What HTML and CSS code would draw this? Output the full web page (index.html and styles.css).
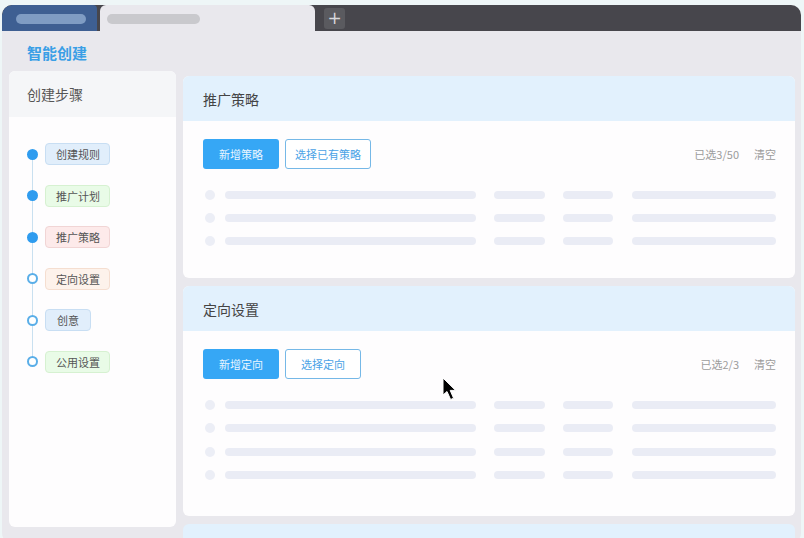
FILE: index.html
```html
<!DOCTYPE html>
<html lang="zh">
<head>
<meta charset="utf-8">
<title>智能创建</title>
<link rel="stylesheet" href="styles.css">
</head>
<body>
<div class="window">
  <div class="tabbar">
    <div class="tab tab-active"><span class="tab-pill"></span></div>
    <div class="tab tab-light"><span class="tab-pill"></span></div>
    <div class="tab-add">+</div>
  </div>
  <div class="content">
    <div class="page-title">智能创建</div>
    <div class="main">
      <aside class="steps-panel">
        <div class="steps-head">创建步骤</div>
        <ul class="steps">
          <li class="step"><span class="dot dot-on"></span><span class="tag tag-blue">创建规则</span></li>
          <li class="step"><span class="dot dot-on"></span><span class="tag tag-green">推广计划</span></li>
          <li class="step"><span class="dot dot-on"></span><span class="tag tag-red">推广策略</span></li>
          <li class="step"><span class="dot"></span><span class="tag tag-orange">定向设置</span></li>
          <li class="step"><span class="dot"></span><span class="tag tag-blue tag-short">创意</span></li>
          <li class="step"><span class="dot"></span><span class="tag tag-green">公用设置</span></li>
        </ul>
      </aside>
      <section class="cards">
        <div class="card">
          <div class="card-head">推广策略</div>
          <div class="card-body">
            <div class="toolbar">
              <button class="btn btn-primary">新增策略</button>
              <button class="btn btn-outline">选择已有策略</button>
              <span class="toolbar-info">已选3/50</span>
              <span class="toolbar-clear">清空</span>
            </div>
            <div class="skeleton">
              <div class="sk-row"><span class="sk-dot"></span><span class="sk-bar sk-a"></span><span class="sk-bar sk-b"></span><span class="sk-bar sk-c"></span><span class="sk-bar sk-d"></span></div>
              <div class="sk-row"><span class="sk-dot"></span><span class="sk-bar sk-a"></span><span class="sk-bar sk-b"></span><span class="sk-bar sk-c"></span><span class="sk-bar sk-d"></span></div>
              <div class="sk-row"><span class="sk-dot"></span><span class="sk-bar sk-a"></span><span class="sk-bar sk-b"></span><span class="sk-bar sk-c"></span><span class="sk-bar sk-d"></span></div>
            </div>
          </div>
        </div>
        <div class="card card-tall">
          <div class="card-head">定向设置</div>
          <div class="card-body">
            <div class="toolbar">
              <button class="btn btn-primary">新增定向</button>
              <button class="btn btn-outline">选择定向</button>
              <span class="toolbar-info">已选2/3</span>
              <span class="toolbar-clear">清空</span>
            </div>
            <div class="skeleton">
              <div class="sk-row"><span class="sk-dot"></span><span class="sk-bar sk-a"></span><span class="sk-bar sk-b"></span><span class="sk-bar sk-c"></span><span class="sk-bar sk-d"></span></div>
              <div class="sk-row"><span class="sk-dot"></span><span class="sk-bar sk-a"></span><span class="sk-bar sk-b"></span><span class="sk-bar sk-c"></span><span class="sk-bar sk-d"></span></div>
              <div class="sk-row"><span class="sk-dot"></span><span class="sk-bar sk-a"></span><span class="sk-bar sk-b"></span><span class="sk-bar sk-c"></span><span class="sk-bar sk-d"></span></div>
              <div class="sk-row"><span class="sk-dot"></span><span class="sk-bar sk-a"></span><span class="sk-bar sk-b"></span><span class="sk-bar sk-c"></span><span class="sk-bar sk-d"></span></div>
            </div>
          </div>
        </div>
        <div class="card card-peek">
          <div class="card-head"></div>
        </div>
      </section>
    </div>
  </div>
  <svg class="cursor" width="18" height="24" viewBox="0 0 18 24" aria-hidden="true">
    <path d="M1 1 L1 18 L5 14.5 L8.6 22.5 L11.6 21.2 L8.2 13.4 L13.6 13.4 Z" fill="#000" stroke="#fff" stroke-width="1" stroke-linejoin="round"/>
  </svg>
</div>
</body>
</html>
```

FILE: styles.css
```css
* { box-sizing: border-box; }
html, body { margin: 0; padding: 0; }
body {
  width: 804px;
  height: 538px;
  overflow: hidden;
  background: #eef6f7;
  font-family: "Noto Sans CJK SC", "Noto Sans", sans-serif;
}
.window {
  position: relative;
  margin: 5px 3px 0 2px;
  height: 538px;
  border-radius: 10px;
  overflow: hidden;
  background: #e9e8ed;
  display: flex;
  flex-direction: column;
}
.tabbar {
  height: 26px;
  flex: none;
  background: #47464c;
  display: flex;
  align-items: stretch;
}
.tab { height: 26px; flex: none; }
.tab-active {
  width: 95px;
  background: #3e5f92;
  border-radius: 10px 4px 0 0;
  padding: 9px 0 0 14px;
}
.tab-active .tab-pill { background: #7f9cc3; width: 70px; }
.tab-light {
  width: 215px;
  margin-left: 3px;
  background: #e9e8ed;
  border-radius: 6px 6px 0 0;
  padding: 9px 0 0 7px;
}
.tab-light .tab-pill { background: #c9c9cd; width: 93px; }
.tab-pill {
  display: block;
  height: 10px;
  border-radius: 5px;
}
.tab-add {
  align-self: center;
  margin-left: 9px;
  width: 21px;
  height: 21px;
  border-radius: 3px;
  background: #5a5a5f;
  color: #d8d8dc;
  font-family: "DejaVu Sans", sans-serif;
  font-size: 17px;
  line-height: 20px;
  text-align: center;
}
.content { flex: 1; display: flex; flex-direction: column; min-height: 0; }
.page-title {
  height: 40px;
  padding: 12px 0 0 25px;
  font-size: 15px;
  line-height: 20px;
  font-weight: 700;
  color: #3a9fe6;
}
.main {
  flex: 1;
  min-height: 0;
  display: flex;
  gap: 7px;
  padding: 0 6px 0 7px;
}
.steps-panel {
  flex: none;
  width: 167px;
  height: 456px;
  background: #fefdfe;
  border-radius: 6px;
  overflow: hidden;
}
.steps-head {
  height: 46px;
  padding-left: 18px;
  background: #f5f6f8;
  font-size: 14px;
  line-height: 46px;
  color: #555;
}
.steps {
  position: relative;
  list-style: none;
  margin: 0;
  padding: 26px 0 0 18px;
  display: flex;
  flex-direction: column;
  gap: 19.6px;
}
.steps::before {
  content: "";
  position: absolute;
  left: 23px;
  top: 38px;
  height: 208px;
  width: 1px;
  background: #c9e0f0;
}
.step { display: flex; align-items: center; height: 22px; gap: 7px; }
.dot {
  position: relative;
  width: 11px;
  height: 11px;
  flex: none;
  border-radius: 50%;
  background: #fff;
  border: 2px solid #5aaee8;
}
.dot-on { background: #2f9cef; border-color: #2f9cef; }
.tag {
  height: 22px;
  padding: 0 9px 0 10px;
  border: 1px solid;
  border-radius: 4px;
  font-size: 11px;
  line-height: 20px;
  color: #555;
}
.tag-short { padding: 0 11px; }
.tag-blue { background: #e1eefb; border-color: #c8def3; }
.tag-green { background: #e9fbe7; border-color: #d6f1d1; }
.tag-red { background: #fdeaea; border-color: #f1d5d5; }
.tag-orange { background: #fdf2eb; border-color: #f5ded0; }

.cards {
  flex: 1;
  min-width: 0;
  padding-top: 5px;
  display: flex;
  flex-direction: column;
  gap: 8px;
  overflow: hidden;
}
.card {
  flex: none;
  background: #fefdfe;
  border-radius: 6px;
  overflow: hidden;
}
.card-head {
  height: 45px;
  padding-left: 20px;
  background: #e2f1fd;
  font-size: 14px;
  line-height: 46px;
  color: #444;
}
.card-body { padding: 18px 19px 32px 20px; }
.card-tall .card-body { padding-bottom: 36px; }
.card-tall .skeleton { gap: 13.4px; }
.toolbar { display: flex; align-items: center; height: 30px; gap: 6px; }
.btn {
  height: 30px;
  min-width: 76px;
  border-radius: 3px;
  font-family: inherit;
  font-size: 11px;
  padding: 0 9px;
  cursor: default;
}
.btn-primary {
  background: #36a7f5;
  border: none;
  color: #eaf6ff;
}
.btn-outline {
  background: #fff;
  border: 1.5px solid #75b8e7;
  color: #4aa2e6;
}
.toolbar-info {
  margin-left: auto;
  font-size: 11px;
  color: #9c9c9c;
}
.toolbar-clear {
  margin-left: 9px;
  font-size: 11px;
  color: #9c9c9c;
}
.skeleton {
  margin-top: 21px;
  display: flex;
  flex-direction: column;
  gap: 13px;
}
.sk-row {
  display: flex;
  align-items: center;
  height: 10px;
  gap: 18px;
  padding-left: 2px;
}
.sk-dot {
  width: 10px;
  height: 10px;
  border-radius: 50%;
  background: #eceef6;
  margin-right: -8px;
}
.sk-bar { height: 8px; border-radius: 4px; background: #eaecf5; }
.sk-a { width: 251px; }
.sk-b { width: 51px; }
.sk-c { width: 50px; }
.sk-d { width: 144px; margin-left: 1px; }
.card-peek .card-head { height: 20px; }
.cursor {
  position: absolute;
  left: 440px;
  top: 372px;
}
```
